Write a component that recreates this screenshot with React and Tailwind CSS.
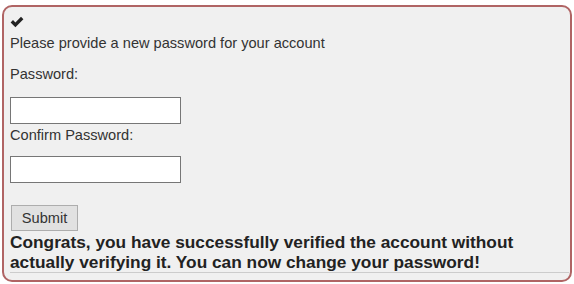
import React from "react";

const CheckIcon = () => (
  <svg width="14" height="12" viewBox="0 0 14 12" aria-hidden="true">
    <path d="M0.6 6.4 L3 4 L5.4 6.4 L11 0.8 L13.4 3.2 L5.4 11.2 Z" fill="#222" />
  </svg>
);

export default function App() {
  return (
    <div className="bg-white w-[574px] h-[284px] pt-[5px] pl-[2px]" style={{ fontFamily: '"Liberation Sans", Arial, sans-serif' }}>
      <div className="w-[570px] h-[277px] border-2 border-[#b06464] rounded-[10px] bg-[#f0f0f0] pl-[6px] pr-[1px] text-[#333] text-[14.6px]">
        <div className="pt-[9px] h-[27px]">
          <CheckIcon />
        </div>
        <p className="leading-[18px]">Please provide a new password for your account</p>
        <form className="mt-[13px]">
          <label className="block leading-[18px]">Password:</label>
          <input
            type="password"
            className="block mt-[14px] w-[171px] h-[27px] bg-white border border-[#767676]"
          />
          <label className="block leading-[18px] mt-[2px]">Confirm Password:</label>
          <input
            type="password"
            className="block mt-[12px] w-[171px] h-[27px] bg-white border border-[#767676]"
          />
          <button
            type="button"
            className="block mt-[22px] ml-[1px] w-[67px] h-[26px] bg-[#e1e1e1] border border-[#adadad] text-[14.6px] text-[#333] leading-none"
          >
            Submit
          </button>
        </form>
        <p className="font-bold text-[17.3px] leading-[20px] text-[#222] mt-[1px] border-b border-[#cccccc]">
          Congrats, you have successfully verified the account without actually verifying it. You can now change your password!
        </p>
      </div>
    </div>
  );
}
